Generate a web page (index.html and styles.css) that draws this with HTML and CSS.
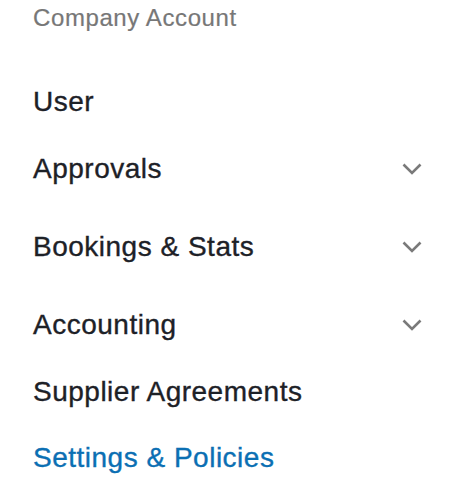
FILE: index.html
```html
<!DOCTYPE html>
<html>
<head>
<meta charset="utf-8">
<link rel="stylesheet" href="styles.css">
</head>
<body>
<nav class="menu">
  <div class="menu-title">Company Account</div>
  <ul class="menu-list">
    <li class="item item-plain">User</li>
    <li class="item item-group"><span>Approvals</span><svg class="chev" viewBox="0 0 20 12" width="20" height="12"><path d="M1.5 1.5 L10 10 L18.5 1.5" fill="none" stroke="#7a7a7a" stroke-width="2.6"/></svg></li>
    <li class="item item-group"><span>Bookings &amp; Stats</span><svg class="chev" viewBox="0 0 20 12" width="20" height="12"><path d="M1.5 1.5 L10 10 L18.5 1.5" fill="none" stroke="#7a7a7a" stroke-width="2.6"/></svg></li>
    <li class="item item-group"><span>Accounting</span><svg class="chev" viewBox="0 0 20 12" width="20" height="12"><path d="M1.5 1.5 L10 10 L18.5 1.5" fill="none" stroke="#7a7a7a" stroke-width="2.6"/></svg></li>
    <li class="item item-plain">Supplier Agreements</li>
    <li class="item item-plain item-active">Settings &amp; Policies</li>
  </ul>
</nav>
</body>
</html>
```

FILE: styles.css
```css
html, body {
  margin: 0;
  padding: 0;
  background: #ffffff;
}
body {
  font-family: "Liberation Sans", Arial, sans-serif;
  width: 454px;
  height: 488px;
  overflow: hidden;
}
.menu {
  padding: 0 32px 0 33px;
}
.menu-title {
  height: 36px;
  display: flex;
  align-items: center;
  font-size: 24px;
  letter-spacing: 0.6px;
  color: #777777;
  -webkit-text-stroke: 0.2px #777777;
}
.menu-list {
  list-style: none;
  margin: 38px 0 0 0;
  padding: 0;
}
.item {
  display: flex;
  align-items: center;
  justify-content: space-between;
  font-size: 28px;
  letter-spacing: 0.5px;
  color: #1d2127;
  -webkit-text-stroke: 0.35px #1d2127;
}
.item-plain {
  height: 56px;
}
.item-group {
  height: 78px;
}
.item-active {
  color: #0b6fb3;
  -webkit-text-stroke: 0.35px #0b6fb3;
  margin-top: 10px;
}
.chev {
  display: block;
}
```
